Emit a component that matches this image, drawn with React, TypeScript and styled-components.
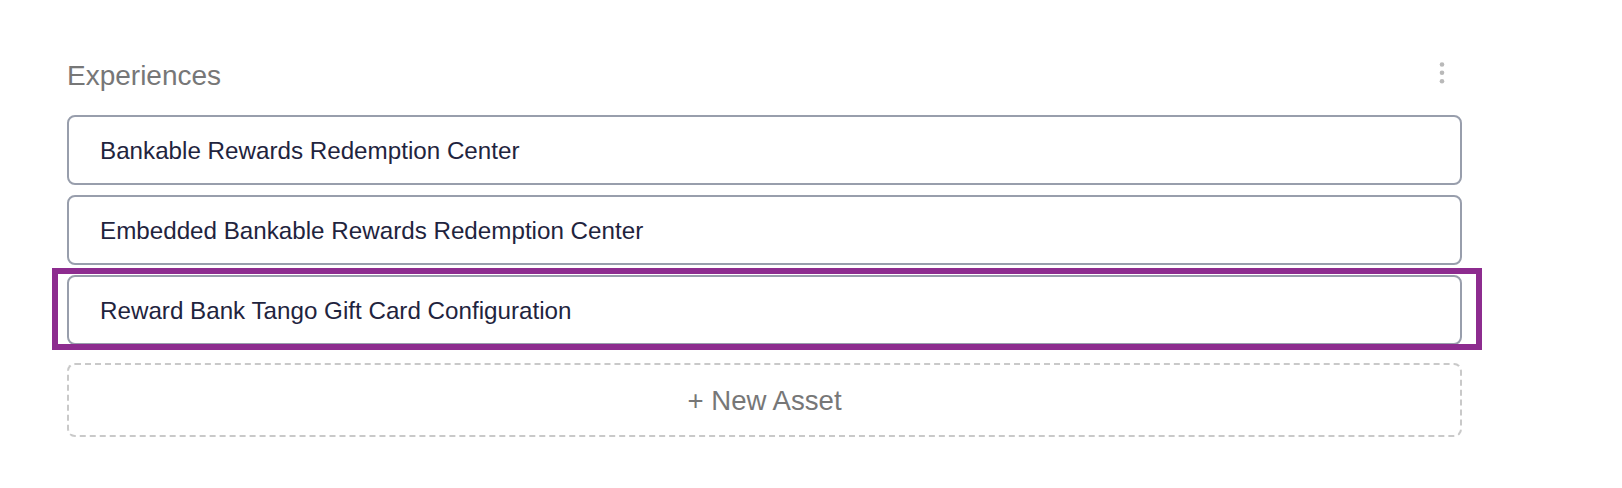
import React from "react";
import styled, { createGlobalStyle } from "styled-components";

const GlobalStyle = createGlobalStyle`
  html, body {
    margin: 0;
    padding: 0;
    background: #ffffff;
  }
  body {
    font-family: "Liberation Sans", Arial, Helvetica, sans-serif;
  }
`;

const Page = styled.div`
  padding: 60px 0 40px 67px;
`;

const Section = styled.section`
  width: 1395px;
  display: flex;
  flex-direction: column;
`;

const Header = styled.div`
  display: flex;
  justify-content: space-between;
  align-items: flex-start;
  height: 32px;
  margin-bottom: 23px;
`;

const Title = styled.h2`
  margin: 0;
  font-size: 28px;
  line-height: 32px;
  font-weight: 400;
  color: #777777;
`;

const MenuButton = styled.button`
  border: 0;
  background: transparent;
  padding: 0;
  margin: 1.5px 17px 0 0;
  width: 6px;
  height: 22px;
  display: flex;
  cursor: pointer;
`;

const List = styled.div`
  display: flex;
  flex-direction: column;
  gap: 10px;
`;

const Card = styled.div<{ $highlighted?: boolean }>`
  position: relative;
  box-sizing: border-box;
  height: 70px;
  border: 2px solid #989eac;
  border-radius: 8px;
  background: #ffffff;
  display: flex;
  align-items: center;
  padding: 1px 0 0 31px;
  font-size: 24.2px;
  color: #1f243e;
`;

const Highlight = styled.div`
  position: absolute;
  left: -17px;
  right: -22px;
  top: -9px;
  bottom: -7px;
  border: 6px solid #8d2c8f;
  pointer-events: none;
`;

const AddButton = styled.button`
  box-sizing: border-box;
  margin-top: 18px;
  height: 74px;
  width: 100%;
  border: 2px dashed #c9c9c9;
  border-radius: 8px;
  background: #ffffff;
  display: flex;
  align-items: center;
  justify-content: center;
  font-family: "Liberation Sans", Arial, Helvetica, sans-serif;
  font-size: 27.6px;
  color: #777777;
  cursor: pointer;
  padding: 1px 0 0 0;
`;

const DotsIcon = () => (
  <svg width="6" height="22" viewBox="0 0 6 22" aria-hidden="true">
    <circle cx="3" cy="2.5" r="2.3" fill="#b9b9b9" />
    <circle cx="3" cy="10.8" r="2.3" fill="#b9b9b9" />
    <circle cx="3" cy="19.2" r="2.3" fill="#b9b9b9" />
  </svg>
);

const items = [
  { name: "Bankable Rewards Redemption Center", highlighted: false },
  { name: "Embedded Bankable Rewards Redemption Center", highlighted: false },
  { name: "Reward Bank Tango Gift Card Configuration", highlighted: true },
];

export default function App() {
  return (
    <>
      <GlobalStyle />
      <Page>
        <Section>
          <Header>
            <Title>Experiences</Title>
            <MenuButton aria-label="More options">
              <DotsIcon />
            </MenuButton>
          </Header>
          <List>
            {items.map((item) => (
              <Card key={item.name} $highlighted={item.highlighted}>
                {item.name}
                {item.highlighted && <Highlight />}
              </Card>
            ))}
          </List>
          <AddButton>+ New Asset</AddButton>
        </Section>
      </Page>
    </>
  );
}
